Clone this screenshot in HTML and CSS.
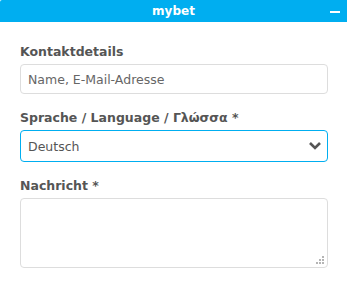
FILE: index.html
```html
<!DOCTYPE html>
<html lang="de">
<head>
    <meta charset="UTF-8">
    <meta name="viewport" content="width=device-width, initial-scale=1.0">
    <title>mybet Kontakt</title>
    <link rel="stylesheet" href="styles.css">
</head>
<body>
    <div class="widget">
        <div class="widget-header">
            <div class="widget-title">mybet</div>
            <div class="widget-minimize"></div>
        </div>

        <form class="contact-form">
            <div class="field">
                <label class="field-label" for="contact">Kontaktdetails</label>
                <input class="field-input field-text" type="text" id="contact" placeholder="Name, E-Mail-Adresse">
            </div>

            <div class="field">
                <label class="field-label" for="language">Sprache / Language / Γλώσσα *</label>
                <div class="select-wrap">
                    <select class="field-input field-select" id="language">
                        <option>Deutsch</option>
                        <option>English</option>
                        <option>Ελληνικά</option>
                    </select>
                    <svg class="select-arrow" width="14" height="10" viewBox="0 0 14 10">
                        <path d="M2 2 L7 7 L12 2" fill="none" stroke="#555" stroke-width="2.6"/>
                    </svg>
                </div>
            </div>

            <div class="field">
                <label class="field-label" for="message">Nachricht *</label>
                <div class="textarea-wrap">
                    <textarea class="field-input field-textarea" id="message"></textarea>
                    <!-- resize grip -->
                    <svg class="resize-grip" width="9" height="9" viewBox="0 0 9 9">
                        <g fill="#b5b5b5">
                            <rect x="6" y="0" width="2" height="2"/>
                            <rect x="3" y="3" width="2" height="2"/>
                            <rect x="6" y="3" width="2" height="2"/>
                            <rect x="0" y="6" width="2" height="2"/>
                            <rect x="3" y="6" width="2" height="2"/>
                            <rect x="6" y="6" width="2" height="2"/>
                        </g>
                    </svg>
                </div>
            </div>
        </form>
    </div>
</body>
</html>
```

FILE: styles.css
```css
:root {
    --blue: #00aef0;
    --text: #555555;
    --border: #dddddd;
}

body {
    margin: 0;
    font-family: Verdana, "DejaVu Sans", sans-serif;
    background-color: #ffffff;
    color: var(--text);
}

.widget-header {
    height: 22px;
    background-color: var(--blue);
    border-top-left-radius: 2px;
    display: flex;
    align-items: center;
    justify-content: center;
    position: relative;
}

.widget-title {
    color: #ffffff;
    font-weight: bold;
    font-size: 12px;
}

.widget-minimize {
    position: absolute;
    right: 7px;
    top: 11px;
    width: 10px;
    height: 2px;
    background-color: #ffffff;
}

.contact-form {
    padding: 23px 19px 0 20px;
    display: flex;
    flex-direction: column;
    gap: 17px;
}

.field {
    display: flex;
    flex-direction: column;
    gap: 5px;
}

.field-label {
    font-weight: bold;
    font-size: 12.5px;
    line-height: 14px;
}

.field-input {
    box-sizing: border-box;
    width: 100%;
    height: 31px;
    padding: 0 7px;
    border: 1px solid var(--border);
    border-radius: 4px;
    font-family: inherit;
    font-size: 12.5px;
    color: var(--text);
    background-color: #ffffff;
    outline: none;
}

.field-input::placeholder {
    color: #666666;
}

.field-text {
    height: 30px;
}

.select-wrap,
.textarea-wrap {
    position: relative;
}

.field-select {
    appearance: none;
    height: 32px;
    border-color: var(--blue);
}

.select-arrow {
    position: absolute;
    right: 6px;
    top: 11px;
    pointer-events: none;
}

.field-textarea {
    display: block;
    height: 70px;
    resize: none;
}

.resize-grip {
    position: absolute;
    right: 3px;
    bottom: 3px;
    pointer-events: none;
}
```
